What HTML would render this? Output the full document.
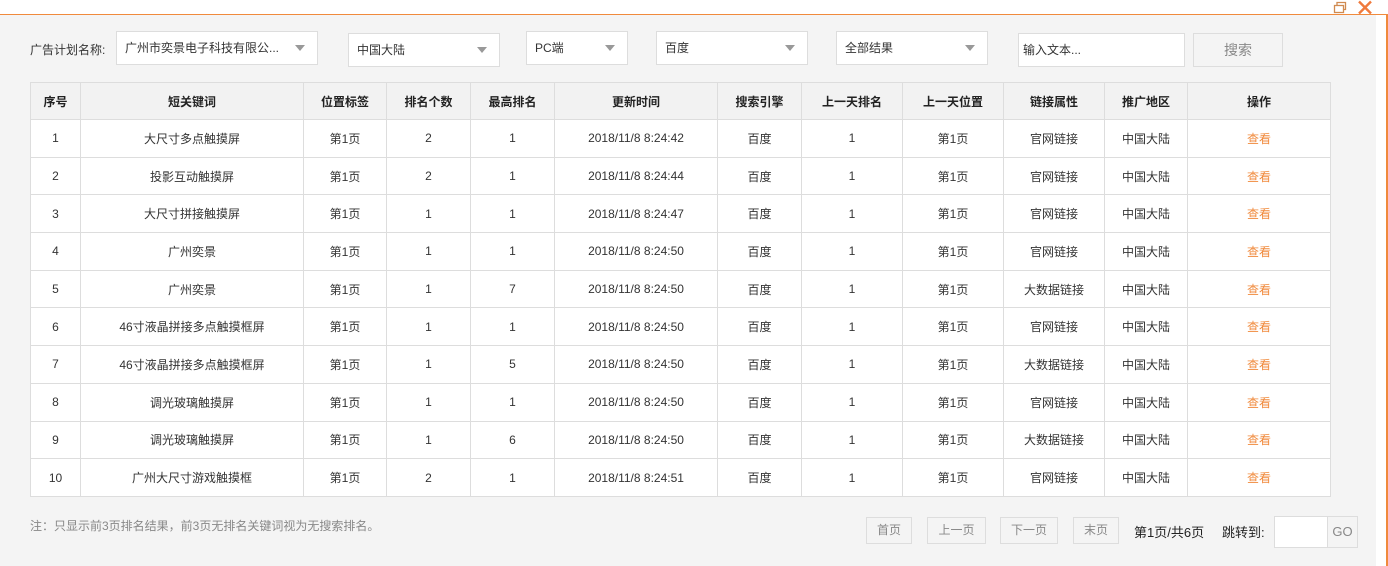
<!DOCTYPE html>
<html><head><meta charset="utf-8"><style>
*{box-sizing:border-box;margin:0;padding:0}
body{width:1388px;height:566px;background:#fff;font-family:"Liberation Sans","Noto Sans CJK SC",sans-serif;font-size:12px;color:#333;position:relative;overflow:hidden}
.main{position:absolute;left:0;top:15px;width:1376px;height:551px;background:#f4f4f4}
.topline{position:absolute;left:0;top:14px;width:1388px;height:1px;background:#f08a3c}
.rline{position:absolute;left:1386px;top:14px;width:2px;height:552px;background:#f08a3c}
.sel,.inp{position:absolute;background:#fff;border:1px solid #ddd;height:34px;line-height:32px;padding-left:8px;font-size:12px;color:#333}
.sel:after{content:"";position:absolute;right:12px;top:13px;border-left:5px solid transparent;border-right:5px solid transparent;border-top:6px solid #999}
.lbl{position:absolute;left:30px;top:41px;font-size:12px}
table{position:absolute;left:30px;top:82px;border-collapse:collapse;background:#fff;table-layout:fixed}
td,th{border:1px solid #ddd;text-align:center;font-size:12px;padding:0}
tr{height:37.7px}
tr.h{height:37px}
th{background:#f2f2f2;font-weight:bold;color:#222}
td a{color:#f08a3c}
.btn{position:absolute;border:1px solid #ddd;background:#f4f4f4;color:#888;text-align:center;font-size:12px}
</style></head><body>
<div class="main"></div>
<div class="topline"></div>
<div class="rline"></div>
<svg style="position:absolute;left:1333px;top:1px" width="14" height="13"><rect x="1.5" y="4.5" width="9" height="7" fill="none" stroke="#d08a50" stroke-width="1.3"/><path d="M4 4.5V1.5H12.5V8.5H10.5" fill="none" stroke="#d08a50" stroke-width="1.3"/></svg>
<svg style="position:absolute;left:1357px;top:0px" width="16" height="15"><path d="M2 1.5L14 13.5M14 1.5L2 13.5" stroke="#f07a3c" stroke-width="2.4"/></svg>
<div class="lbl">广告计划名称:</div>
<div class="sel" style="left:116px;top:31px;width:202px">广州市奕景电子科技有限公...</div>
<div class="sel" style="left:348px;top:33px;width:152px">中国大陆</div>
<div class="sel" style="left:526px;top:31px;width:102px">PC端</div>
<div class="sel" style="left:656px;top:31px;width:152px">百度</div>
<div class="sel" style="left:836px;top:31px;width:152px">全部结果</div>
<div class="inp" style="left:1018px;top:33px;width:167px;padding-left:4px">输入文本...</div>
<div class="btn" style="left:1193px;top:33px;width:90px;height:34px;line-height:32px;font-size:14px">搜索</div>
<table>
<colgroup><col width="50"><col width="223"><col width="83"><col width="84"><col width="84"><col width="163"><col width="84"><col width="101"><col width="101"><col width="101"><col width="83"><col width="143"></colgroup>
<tr class="h"><th>序号</th><th>短关键词</th><th>位置标签</th><th>排名个数</th><th>最高排名</th><th>更新时间</th><th>搜索引擎</th><th>上一天排名</th><th>上一天位置</th><th>链接属性</th><th>推广地区</th><th>操作</th></tr>
<tr><td>1</td><td>大尺寸多点触摸屏</td><td>第1页</td><td>2</td><td>1</td><td>2018/11/8 8:24:42</td><td>百度</td><td>1</td><td>第1页</td><td>官网链接</td><td>中国大陆</td><td><a>查看</a></td></tr>
<tr><td>2</td><td>投影互动触摸屏</td><td>第1页</td><td>2</td><td>1</td><td>2018/11/8 8:24:44</td><td>百度</td><td>1</td><td>第1页</td><td>官网链接</td><td>中国大陆</td><td><a>查看</a></td></tr>
<tr><td>3</td><td>大尺寸拼接触摸屏</td><td>第1页</td><td>1</td><td>1</td><td>2018/11/8 8:24:47</td><td>百度</td><td>1</td><td>第1页</td><td>官网链接</td><td>中国大陆</td><td><a>查看</a></td></tr>
<tr><td>4</td><td>广州奕景</td><td>第1页</td><td>1</td><td>1</td><td>2018/11/8 8:24:50</td><td>百度</td><td>1</td><td>第1页</td><td>官网链接</td><td>中国大陆</td><td><a>查看</a></td></tr>
<tr><td>5</td><td>广州奕景</td><td>第1页</td><td>1</td><td>7</td><td>2018/11/8 8:24:50</td><td>百度</td><td>1</td><td>第1页</td><td>大数据链接</td><td>中国大陆</td><td><a>查看</a></td></tr>
<tr><td>6</td><td>46寸液晶拼接多点触摸框屏</td><td>第1页</td><td>1</td><td>1</td><td>2018/11/8 8:24:50</td><td>百度</td><td>1</td><td>第1页</td><td>官网链接</td><td>中国大陆</td><td><a>查看</a></td></tr>
<tr><td>7</td><td>46寸液晶拼接多点触摸框屏</td><td>第1页</td><td>1</td><td>5</td><td>2018/11/8 8:24:50</td><td>百度</td><td>1</td><td>第1页</td><td>大数据链接</td><td>中国大陆</td><td><a>查看</a></td></tr>
<tr><td>8</td><td>调光玻璃触摸屏</td><td>第1页</td><td>1</td><td>1</td><td>2018/11/8 8:24:50</td><td>百度</td><td>1</td><td>第1页</td><td>官网链接</td><td>中国大陆</td><td><a>查看</a></td></tr>
<tr><td>9</td><td>调光玻璃触摸屏</td><td>第1页</td><td>1</td><td>6</td><td>2018/11/8 8:24:50</td><td>百度</td><td>1</td><td>第1页</td><td>大数据链接</td><td>中国大陆</td><td><a>查看</a></td></tr>
<tr><td>10</td><td>广州大尺寸游戏触摸框</td><td>第1页</td><td>2</td><td>1</td><td>2018/11/8 8:24:51</td><td>百度</td><td>1</td><td>第1页</td><td>官网链接</td><td>中国大陆</td><td><a>查看</a></td></tr>
</table>
<div style="position:absolute;left:30px;top:517px;color:#888;font-size:12px">注：只显示前3页排名结果，前3页无排名关键词视为无搜索排名。</div>
<div class="btn" style="left:866px;top:517px;width:46px;height:27px;line-height:25px">首页</div>
<div class="btn" style="left:927px;top:517px;width:59px;height:27px;line-height:25px">上一页</div>
<div class="btn" style="left:1000px;top:517px;width:58px;height:27px;line-height:25px">下一页</div>
<div class="btn" style="left:1073px;top:517px;width:46px;height:27px;line-height:25px">末页</div>
<div style="position:absolute;left:1134px;top:522px;font-size:13px;color:#222">第1页/共6页</div>
<div style="position:absolute;left:1222px;top:522px;font-size:13px;color:#222">跳转到:</div>
<div style="position:absolute;left:1274px;top:516px;width:54px;height:32px;background:#fff;border:1px solid #ddd"></div>
<div class="btn" style="left:1327px;top:516px;width:31px;height:32px;line-height:30px;font-size:13px">GO</div>
</body></html>
